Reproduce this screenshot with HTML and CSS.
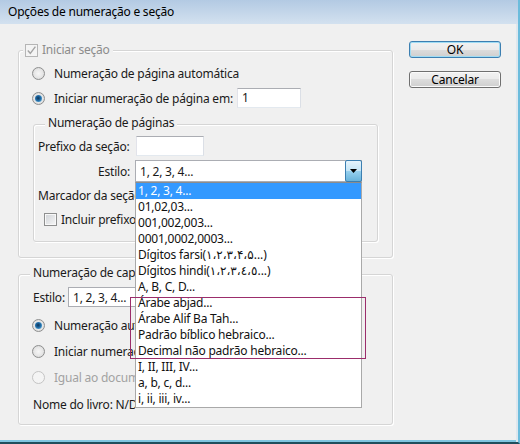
FILE: index.html
```html
<!DOCTYPE html>
<html lang="pt">
<head>
<meta charset="utf-8">
<title>Opções de numeração e seção</title>
<link rel="stylesheet" href="styles.css">
</head>
<body>
<div class="window">
  <div class="titlebar">Opções de numeração e seção</div>
  <div class="content">
    <div class="main">
      <div class="group g1">
        <div class="legend l1">
          <span class="check disabled"><svg width="11" height="11" viewBox="0 0 11 11"><path d="M1.8 5.6 L4.3 8.3 L9.4 1.6" fill="none" stroke="#a3a3a3" stroke-width="1.4"/></svg></span>
          <span class="dis">Iniciar seção</span>
        </div>
        <div class="row r-auto"><span class="radio"></span><span>Numeração de página automática</span></div>
        <div class="row r-start"><span class="radio on"></span><span class="start-txt">Iniciar numeração de página em:</span><span class="input num">1</span></div>
        <div class="group g-inner">
          <div class="legend l2">Numeração de páginas</div>
          <div class="row p-row"><span class="p-lbl">Prefixo da seção:</span><span class="input prefix"></span></div>
          <div class="row s-row">
            <span class="s-lbl">Estilo:</span>
            <div class="select wide">
              <span class="val">1, 2, 3, 4...</span>
              <span class="arrow"><svg width="7" height="4" viewBox="0 0 7 4"><path d="M0 0 H7 L3.5 4 Z" fill="#000"/></svg></span>
              <div class="dropdown">
                <div class="item sel">1, 2, 3, 4...</div>
                <div class="item">01,02,03...</div>
                <div class="item">001,002,003...</div>
                <div class="item">0001,0002,0003...</div>
                <div class="item">Dígitos farsi(۱،۲،۳،۴،۵...)</div>
                <div class="item">Dígitos hindi(١،٢،٣،٤،٥...)</div>
                <div class="item">A, B, C, D...</div>
                <div class="item">Árabe abjad...</div>
                <div class="item">Árabe Alif Ba Tah...</div>
                <div class="item">Padrão bíblico hebraico...</div>
                <div class="item">Decimal não padrão hebraico...</div>
                <div class="item">I, II, III, IV...</div>
                <div class="item">a, b, c, d...</div>
                <div class="item">i, ii, iii, iv...</div>
                <div class="mark"></div>
              </div>
            </div>
          </div>
          <div class="row m-row"><span class="clip m-txt">Marcador da seção:</span></div>
          <div class="row i-row"><span class="check"></span><span class="clip i-txt">Incluir prefixo ao numerar páginas</span></div>
        </div>
      </div>
      <div class="group g2">
        <div class="legend l3"><span class="clip">Numeração de capítulo do documento</span></div>
        <div class="row e-row">
          <span class="e-lbl">Estilo:</span>
          <div class="select narrow">
            <span class="val">1, 2, 3, 4...</span>
          </div>
        </div>
        <div class="row rad"><span class="radio on"></span><span class="clip r-txt">Numeração automática de capítulos</span></div>
        <div class="row rad"><span class="radio"></span><span class="clip r-txt">Iniciar numeração de capítulo em:</span></div>
        <div class="row rad"><span class="radio disabled"></span><span class="clip r-txt dis2">Igual ao documento anterior no livro</span></div>
        <div class="row n-row"><span class="clip n-txt">Nome do livro: N/D</span></div>
      </div>
    </div>
    <div class="buttons">
      <button class="btn default">OK</button>
      <button class="btn">Cancelar</button>
    </div>
  </div>
</div>
</body>
</html>
```

FILE: styles.css
```css
* { box-sizing: border-box; }
html, body { margin: 0; padding: 0; }
body {
  width: 520px;
  height: 444px;
  overflow: hidden;
  background: #f0f0f0;
  font-family: "Noto Sans", "DejaVu Sans", sans-serif;
  font-size: 12px;
  letter-spacing: -0.22px;
  color: #1a1a1a;
}
.window {
  width: 520px;
  height: 444px;
  background: #f0f0f0;
  border-right: 2px solid #6cbcdc;
  border-bottom: 2px solid #1f4e5c;
  box-shadow: inset -2px 0 0 #dde7ee, inset 0 -2px 0 #7fc5e0;
  display: flex;
  flex-direction: column;
}
.titlebar {
  height: 24px;
  flex: none;
  background: linear-gradient(#b3cae3, #d3e1ef);
  padding-left: 8px;
  line-height: 24px;
  color: #000;
  font-size: 12px;
  white-space: nowrap;
}
.content {
  display: flex;
  padding-left: 18px;
}
.main { width: 375px; flex: none; }
.buttons {
  margin-left: 16px;
  padding-top: 17px;
  display: flex;
  flex-direction: column;
  gap: 13px;
}
.btn {
  width: 92px;
  height: 17px;
  padding: 0;
  border: 1px solid #707070;
  border-radius: 3px;
  background: linear-gradient(#f2f2f2 0, #ebebeb 50%, #dddddd 50%, #cfcfcf 100%);
  box-shadow: inset 0 0 0 1px #fbfbfb;
  font-family: inherit;
  font-size: 12px;
  letter-spacing: inherit;
  line-height: 15px;
  color: #000;
}
.btn.default {
  border-color: #3c7fb1;
  box-shadow: inset 0 0 0 1px #9fdcf4;
}

.group {
  border: 1px solid #d5d5d5;
  border-radius: 3px;
  box-shadow: 1px 1px 0 #fff, inset 1px 1px 0 #fff;
}
.legend {
  display: flex;
  align-items: center;
  width: max-content;
  height: 16px;
  line-height: 16px;
  background: #f0f0f0;
  white-space: nowrap;
}
.row {
  display: flex;
  align-items: center;
  height: 16px;
  white-space: nowrap;
}
.clip {
  display: block;
  overflow: hidden;
  white-space: nowrap;
}

.g1 { margin-top: 26px; padding-bottom: 15px; }
.l1 { margin: -9px 0 0 4px; padding: 0 3px 0 2px; }
.l1 .check { margin-right: 4px; }
.dis { color: #8c8c8c; }
.dis2 { color: #a2a2a2; }
.r-auto { margin-top: 7px; padding-left: 13px; }
.r-start { margin-top: 7px; height: 20px; padding-left: 13px; }
.start-txt { width: 183px; flex: none; }

.radio {
  width: 13px;
  height: 13px;
  flex: none;
  margin-right: 9px;
  border-radius: 50%;
  border: 1px solid #8e8f8f;
  background: radial-gradient(circle at 50% 50%, #f6f6f6 0, #e6e6e6 55%, #cdcdcd 100%);
  position: relative;
}
.radio.on::after {
  content: "";
  position: absolute;
  left: 2px;
  top: 2px;
  width: 7px;
  height: 7px;
  border-radius: 50%;
  background: radial-gradient(circle at 45% 45%, #0d3457 0, #1f6aa5 45%, #7fcdf2 100%);
}
.radio.disabled {
  border-color: #c4c4c4;
  background: #f4f4f4;
}
.check {
  width: 13px;
  height: 13px;
  flex: none;
  border: 1px solid #8e8f8f;
  background: linear-gradient(135deg, #cfd2d6, #f7f7f7);
  box-shadow: inset 0 0 0 1px #f8f8f8;
  display: flex;
  align-items: center;
  justify-content: center;
}
.check.disabled {
  border-color: #b5b5b5;
  background: #f4f4f4;
  box-shadow: none;
}
.input {
  display: block;
  flex: none;
  height: 20px;
  background: #fff;
  border: 1px solid #abadb3;
  border-color: #abadb3 #dbdfe6 #e3e9ef #e2e3ea;
  line-height: 18px;
  padding-left: 4px;
}
.input.num { width: 64px; }
.input.prefix { width: 68px; }

.g-inner { margin: 16px 14px 0 14px; padding-bottom: 14px; }
.l2 { margin: -10px 0 0 11px; padding: 0 3px; }
.p-row { margin-top: 5px; height: 20px; padding-left: 4px; }
.p-lbl { width: 98px; flex: none; }
.s-row { margin-top: 4px; height: 22px; padding-left: 4px; }
.s-lbl { width: 97px; flex: none; text-align: right; padding-right: 5px; }
.m-row { margin-top: 5px; padding-left: 4px; }
.m-txt { max-width: 97px; }
.i-row { margin-top: 8px; padding-left: 10px; }
.i-row .check { margin-right: 4px; }
.i-txt { max-width: 74px; }

.select {
  position: relative;
  display: flex;
  align-items: stretch;
  background: #fff;
  border: 1px solid #abadb3;
  flex: none;
}
.select.wide { width: 227px; height: 22px; }
.select.narrow { width: 70px; height: 20px; }
.select .val {
  flex: 1;
  padding-left: 4px;
  display: flex;
  align-items: center;
  overflow: hidden;
  white-space: nowrap;
}
.arrow {
  width: 17px;
  margin: -1px -1px -1px 0;
  border: 1px solid #3c7fb1;
  border-radius: 2px;
  background: linear-gradient(#e5f4fc 0, #c4e5f6 50%, #98d1ef 50%, #68b3db 100%);
  display: flex;
  align-items: center;
  justify-content: center;
}
.dropdown {
  position: absolute;
  left: -1px;
  top: 21px;
  width: 227px;
  background: #fff;
  border: 1px solid #a9a9a9;
  border-top-color: #8c8c8c;
  z-index: 10;
}
.item {
  height: 16px;
  line-height: 16px;
  padding-left: 2px;
  color: #111;
  white-space: nowrap;
}
.item.sel {
  background: #3399ff;
  color: #fff;
}
.mark {
  position: absolute;
  left: -6px;
  top: 114px;
  width: 236px;
  height: 62px;
  border: 1px solid #9b2d6b;
}

.g2 { margin-top: 16px; padding-bottom: 12px; }
.l3 { margin: -10px 0 0 11px; padding: 0 0 0 3px; }
.l3 .clip { max-width: 102px; }
.e-row { margin-top: 6px; height: 20px; padding-left: 14px; }
.e-lbl { width: 35px; flex: none; }
.rad { margin-top: 10px; padding-left: 13px; }
.r-txt { max-width: 82px; }
.n-row { margin-top: 11px; padding-left: 14px; }
.n-txt { max-width: 102px; }
```
